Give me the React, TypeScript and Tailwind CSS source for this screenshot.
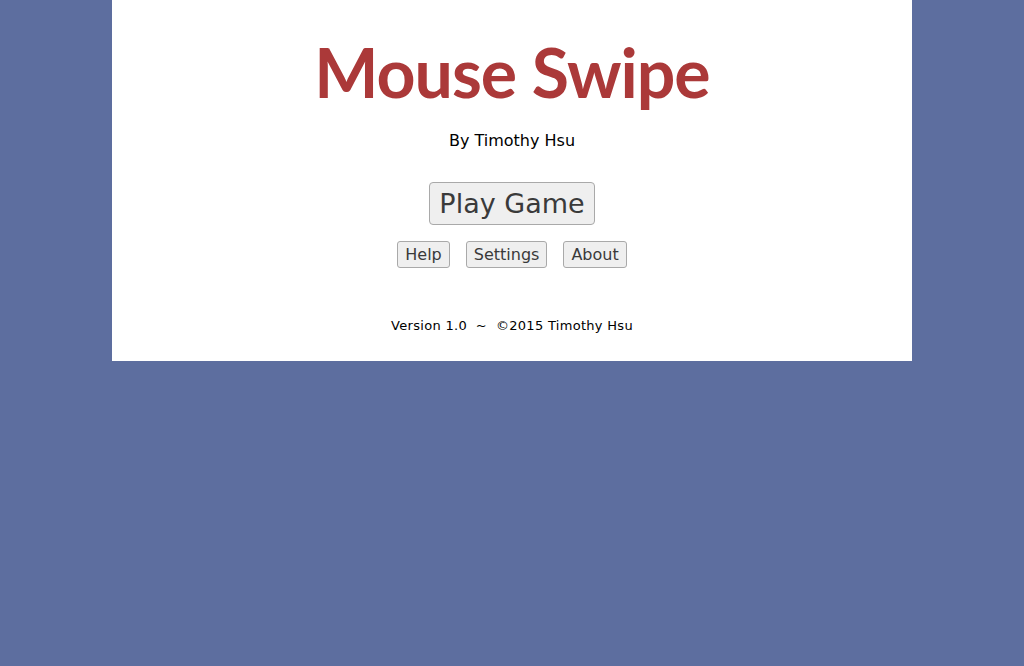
export default function App() {
  return (
    <div className="min-h-[666px] bg-[#5d6e9f]" style={{ fontFamily: '"DejaVu Sans", Verdana, sans-serif' }}>
      <div className="mx-auto flex h-[361px] w-[800px] flex-col items-center bg-white">
        <h1
          className="mt-[27px] text-[68px] leading-[90px] font-bold tracking-[-1px] text-[#ab3939]"
          style={{ fontFamily: '"Lato", "Open Sans", sans-serif' }}
        >
          Mouse Swipe
        </h1>
        <p className="mt-[14px] text-[16px] leading-[20px] text-black">By Timothy Hsu</p>
        <button className="mt-[31px] h-[43px] rounded-[4px] border border-[#a9a9a9] bg-[#efefef] px-[9px] text-[27px] leading-none text-[#3a3a3a]">
          Play Game
        </button>
        <div className="mt-[16px] flex gap-[16px]">
          {['Help', 'Settings', 'About'].map((t) => (
            <button
              key={t}
              className="h-[27px] rounded-[3px] border border-[#a9a9a9] bg-[#efefef] px-[7px] text-[16px] leading-none text-[#3a3a3a]"
            >
              {t}
            </button>
          ))}
        </div>
        <p className="mt-[50px] text-[13px] leading-[16px] tracking-[0.3px] text-black whitespace-pre">
          {'Version 1.0  ~  ©2015 Timothy Hsu'}
        </p>
      </div>
    </div>
  )
}
